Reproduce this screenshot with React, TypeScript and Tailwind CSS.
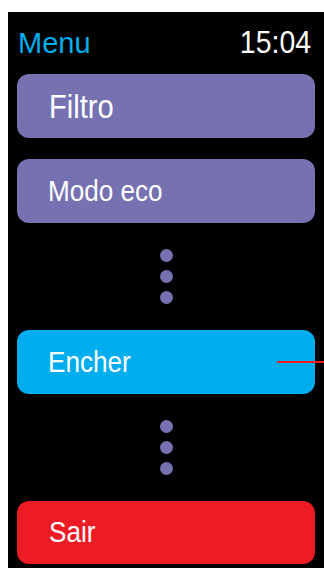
import React from "react";

function Dots() {
  return (
    <div className="h-[107px] flex flex-col items-center justify-center gap-[8px]">
      <div className="w-[13px] h-[13px] rounded-full bg-[#7671b1]" />
      <div className="w-[13px] h-[13px] rounded-full bg-[#7671b1]" />
      <div className="w-[13px] h-[13px] rounded-full bg-[#7671b1]" />
    </div>
  );
}

export default function App() {
  return (
    <div
      className="w-[324px] h-[568px] bg-white pl-[8px] pt-[12px]"
      style={{ fontFamily: '"Liberation Sans", Arial, sans-serif' }}
    >
      <div className="w-[316px] h-[556px] bg-black flex flex-col px-[9px] pt-[14px]">
        <div className="flex justify-between items-baseline pl-[1px] pr-[4px]">
          <span className="text-[29px] leading-none text-[#00aeef]">Menu</span>
          <span className="text-[32px] leading-none text-white scale-x-[0.89] origin-right">15:04</span>
        </div>
        <div className="mt-[16px] h-[64px] rounded-[12px] bg-[#7671b1] flex items-center pl-[32px]">
          <span className="text-[33px] leading-none text-white scale-x-[0.88] origin-left">Filtro</span>
        </div>
        <div className="mt-[21px] h-[64px] rounded-[12px] bg-[#7671b1] flex items-center pl-[31px]">
          <span className="text-[29px] leading-none text-white scale-x-[0.9] origin-left whitespace-nowrap">Modo eco</span>
        </div>
        <Dots />
        <div className="relative h-[64px] rounded-[12px] bg-[#00aeef] flex items-center pl-[31px]">
          <span className="text-[29px] leading-none text-white scale-x-[0.9] origin-left">Encher</span>
          <div className="absolute left-[260px] top-[31px] w-[47px] h-[2px] bg-[#ed1c24]" />
        </div>
        <Dots />
        <div className="h-[63px] rounded-[12px] bg-[#ed1c24] flex items-center pl-[32px]">
          <span className="text-[29px] leading-none text-white scale-x-[0.9] origin-left">Sair</span>
        </div>
      </div>
    </div>
  );
}
